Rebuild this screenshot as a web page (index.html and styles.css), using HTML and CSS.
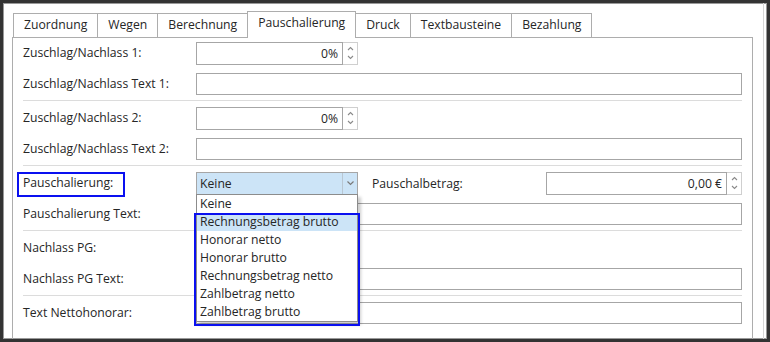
FILE: index.html
```html
<!DOCTYPE html>
<html lang="de">
<head>
  <meta charset="UTF-8">
  <title>Pauschalierung</title>
  <link rel="stylesheet" href="styles.css">
</head>
<body>
  <div class="window">
    <div class="inner">
      <div class="tabs">
        <div class="tab">Zuordnung</div>
        <div class="tab">Wegen</div>
        <div class="tab">Berechnung</div>
        <div class="tab active">Pauschalierung</div>
        <div class="tab">Druck</div>
        <div class="tab">Textbausteine</div>
        <div class="tab">Bezahlung</div>
      </div>

      <div class="panel">
        <div class="row">
          <div class="label">Zuschlag/Nachlass 1:</div>
          <div class="spin">
            <div class="spin-val">0%</div>
            <div class="spin-btn">
              <svg width="7" height="5" viewBox="0 0 7 5"><polyline points="1,4 3.5,1.5 6,4" fill="none" stroke="#8a8a8a" stroke-width="1.1"/></svg>
              <svg width="7" height="5" viewBox="0 0 7 5"><polyline points="1,1 3.5,3.5 6,1" fill="none" stroke="#8a8a8a" stroke-width="1.1"/></svg>
            </div>
          </div>
        </div>
        <div class="row">
          <div class="label">Zuschlag/Nachlass Text 1:</div>
          <div class="field"></div>
        </div>
        <div class="sep"></div>

        <div class="row">
          <div class="label">Zuschlag/Nachlass 2:</div>
          <div class="spin">
            <div class="spin-val">0%</div>
            <div class="spin-btn">
              <svg width="7" height="5" viewBox="0 0 7 5"><polyline points="1,4 3.5,1.5 6,4" fill="none" stroke="#8a8a8a" stroke-width="1.1"/></svg>
              <svg width="7" height="5" viewBox="0 0 7 5"><polyline points="1,1 3.5,3.5 6,1" fill="none" stroke="#8a8a8a" stroke-width="1.1"/></svg>
            </div>
          </div>
        </div>
        <div class="row">
          <div class="label">Zuschlag/Nachlass Text 2:</div>
          <div class="field"></div>
        </div>
        <div class="sep"></div>

        <div class="row">
          <div class="label marked">Pauschalierung:</div>
          <div class="combo">
            <div class="combo-val">Keine</div>
            <div class="combo-btn">
              <svg width="9" height="6" viewBox="0 0 9 6"><polyline points="1.5,1.5 4.5,4.5 7.5,1.5" fill="none" stroke="#7a7a7a" stroke-width="1.2"/></svg>
            </div>
            <div class="dropdown">
              <div class="item">Keine</div>
              <div class="item selected">Rechnungsbetrag brutto</div>
              <div class="item">Honorar netto</div>
              <div class="item">Honorar brutto</div>
              <div class="item">Rechnungsbetrag netto</div>
              <div class="item">Zahlbetrag netto</div>
              <div class="item">Zahlbetrag brutto</div>
              <div class="dropdown-mark"></div>
            </div>
          </div>
          <div class="label2">Pauschalbetrag:</div>
          <div class="spin wide">
            <div class="spin-val">0,00 €</div>
            <div class="spin-btn">
              <svg width="7" height="5" viewBox="0 0 7 5"><polyline points="1,4 3.5,1.5 6,4" fill="none" stroke="#8a8a8a" stroke-width="1.1"/></svg>
              <svg width="7" height="5" viewBox="0 0 7 5"><polyline points="1,1 3.5,3.5 6,1" fill="none" stroke="#8a8a8a" stroke-width="1.1"/></svg>
            </div>
          </div>
        </div>
        <div class="row">
          <div class="label">Pauschalierung Text:</div>
          <div class="field"></div>
        </div>
        <div class="sep"></div>

        <div class="row">
          <div class="label">Nachlass PG:</div>
          <div class="spin">
            <div class="spin-val">0%</div>
            <div class="spin-btn"></div>
          </div>
        </div>
        <div class="row">
          <div class="label">Nachlass PG Text:</div>
          <div class="field"></div>
        </div>
        <div class="sep"></div>

        <div class="row">
          <div class="label">Text Nettohonorar:</div>
          <div class="field"></div>
        </div>
      </div>
    </div>
  </div>
</body>
</html>
```

FILE: styles.css
```css
*, *::before, *::after {
  box-sizing: border-box;
}
body {
  margin: 0;
  font-family: "Open Sans", "Noto Sans", sans-serif;
  font-size: 12.2px;
  color: #262626;
  background: #fff;
}
.window {
  height: 342px;
  border: 3px solid #333;
  box-shadow: inset 0 0 0 1px #999;
  padding: 0 3px 0 0;
  overflow: hidden;
  background: #fff;
}
.inner {
  height: 100%;
  padding: 8px 10px 0 9px;
  border-right: 1px solid #d6d6d6;
}
.tabs {
  display: flex;
  padding-left: 1px;
  height: 26px;
  align-items: flex-end;
}
.tab {
  height: 24px;
  padding: 0 10px;
  line-height: 22px;
  border: 1px solid #adadad;
  border-left: none;
  border-bottom: none;
  background: #fff;
}
.tab:first-child {
  border-left: 1px solid #adadad;
}
.tab.active {
  height: 27px;
  margin-bottom: -1px;
  margin-left: -1px;
  border-left: 1px solid #adadad;
  line-height: 22px;
  position: relative;
  z-index: 1;
}
.panel {
  border: 1px solid #adadad;
  border-bottom: none;
  padding: 4px 10px 0 10px;
  height: 320px;
}
.row {
  display: flex;
  align-items: center;
  height: 22px;
  margin-bottom: 9px;
}
.row + .sep {
  margin-top: -4px;
}
.sep {
  height: 1px;
  background: #dcdcdc;
  margin-bottom: 6px;
}
.label {
  width: 173px;
  height: 22px;
  line-height: 22px;
  flex: none;
  position: relative;
  white-space: nowrap;
}
.marked::after {
  content: "";
  position: absolute;
  left: -6px;
  top: 0;
  width: 108px;
  height: 25px;
  border: 2px solid #0a10f0;
}
.field {
  flex: 1;
  height: 22px;
  border: 1px solid #a6a6a6;
  background: #fff;
}
.spin {
  display: flex;
  width: 162px;
  height: 23px;
  flex: none;
}
.spin-val {
  flex: 1;
  border: 1px solid #a6a6a6;
  text-align: right;
  padding-right: 4px;
  line-height: 21px;
}
.spin-btn {
  width: 15px;
  border: 1px solid #cfcfcf;
  border-left: none;
  display: flex;
  flex-direction: column;
  align-items: center;
  justify-content: center;
  gap: 4px;
}
.spin.wide {
  width: 196px;
  margin-left: auto;
}
.combo {
  position: relative;
  display: flex;
  width: 162px;
  height: 23px;
  flex: none;
  border: 1px solid #a6a6a6;
  background: #cce4f7;
}
.combo-val {
  flex: 1;
  padding-left: 3px;
  line-height: 21px;
}
.combo-btn {
  width: 15px;
  border-left: 1px solid #b9c7d3;
  display: flex;
  align-items: center;
  justify-content: center;
}
.label2 {
  margin-left: 14px;
}
.dropdown {
  position: absolute;
  top: 21px;
  left: -1px;
  width: 162px;
  border: 1px solid #8c8c8c;
  background: #fff;
  box-shadow: 3px 3px 3px rgba(0, 0, 0, 0.2);
  z-index: 5;
}
.item {
  height: 18px;
  line-height: 17px;
  padding-left: 3px;
  white-space: nowrap;
}
.item.selected {
  background: #cce4f7;
}
.dropdown-mark {
  position: absolute;
  left: -3px;
  top: 18px;
  width: 166px;
  height: 113px;
  border: 2px solid #0a10f0;
}
```
